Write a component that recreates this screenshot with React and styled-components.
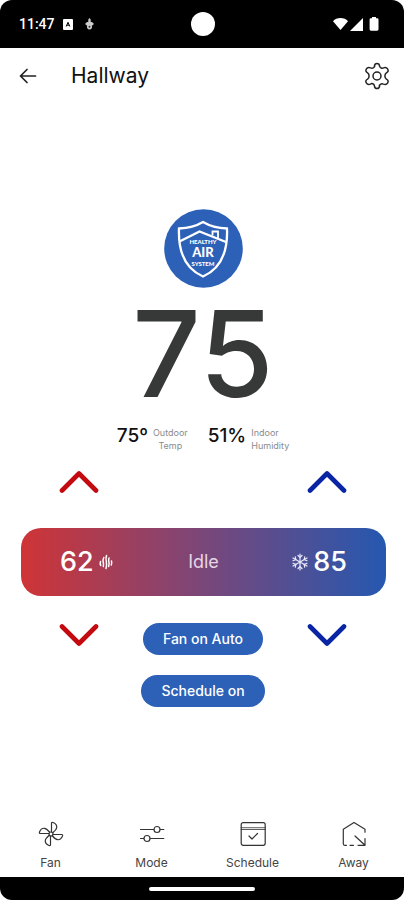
import React, { useState } from "react";
import styled, { createGlobalStyle } from "styled-components";

const GlobalStyle = createGlobalStyle`
    * {
        box-sizing: border-box;
    }

    body {
        margin: 0;
        background-color: #fff;
        color: #111;
        font-family: Inter, "Open Sans", sans-serif;
    }

    button {
        padding: 0;
        border: none;
        background: none;
        color: inherit;
        font: inherit;
        cursor: pointer;
    }

    svg {
        display: block;
        flex-shrink: 0;
    }
`;

const Screen = styled.div`
    display: flex;
    flex-direction: column;
    min-height: 100vh;
`;

const StatusBar = styled.div`
    display: grid;
    grid-template-columns: 1fr auto 1fr;
    align-items: center;
    height: 48px;
    padding: 0 25px 0 19px;
    border-radius: 12px 12px 0 0;
    background-color: #000;
    color: #fff;
`;

const StatusGroup = styled.div`
    display: flex;
    align-items: center;
    justify-content: ${({ $end }) => ($end ? "flex-end" : "flex-start")};
    gap: ${({ $gap }) => $gap};
`;

const Clock = styled.time`
    font-family: Roboto, sans-serif;
    font-size: 14px;
    font-weight: 500;
`;

const Camera = styled.div`
    width: 24px;
    height: 24px;
    margin-left: 7px;
    border-radius: 50%;
    background-color: #fff;
`;

const Header = styled.header`
    display: flex;
    align-items: center;
    height: 56px;
    padding: 0 13px 0 18px;
`;

const Title = styled.h1`
    flex-grow: 1;
    margin: 0 0 0 33px;
    font-size: 21px;
    line-height: 28px;
    font-weight: 400;
`;

const Main = styled.main`
    display: flex;
    flex-direction: column;
    flex-grow: 1;
    justify-content: center;
    padding: 2px 15px 0 17px;
`;

const Reading = styled.section`
    display: flex;
    flex-direction: column;
    align-items: center;
`;

const Temperature = styled.div`
    margin-top: 6px;
    color: #363938;
    font-size: 120px;
    line-height: 120px;
    font-weight: 500;
`;

const Stats = styled.div`
    display: flex;
    gap: 20px;
    margin-top: 12px;
`;

const Stat = styled.div`
    display: flex;
    align-items: flex-start;
    gap: 5px;
`;

const StatValue = styled.span`
    font-size: 19px;
    line-height: 20px;
    font-weight: 500;
`;

const StatLabel = styled.span`
    color: #8b8b8b;
    font-size: 9px;
    line-height: 13px;
    text-align: ${({ $align }) => $align || "left"};
`;

const Row = styled.div`
    display: grid;
    grid-template-columns: repeat(3, 1fr);
    align-items: start;
    justify-items: center;
    margin-top: ${({ $top }) => $top};
`;

const StepButton = styled.button`
    grid-column: ${({ $column }) => $column};
    color: ${({ $color }) => $color};
`;

const Setpoints = styled.section`
    display: grid;
    grid-template-columns: 1fr auto 1fr;
    align-items: center;
    height: 68px;
    margin: 34px 3px 0 4px;
    padding: 0 39px;
    border-radius: 20px;
    background: linear-gradient(90deg, #cf3436 0%, #7d4677 48%, #2558b0 100%);
    color: #fff;
`;

const Setpoint = styled.div`
    display: flex;
    align-items: center;
    justify-content: ${({ $end }) => ($end ? "flex-end" : "flex-start")};
    gap: 5px;
    font-size: 27px;
    font-weight: 500;
`;

const State = styled.span`
    color: #e6d5e5;
    font-size: 18px;
`;

const Pills = styled.div`
    display: flex;
    flex-direction: column;
    align-items: center;
    grid-column: 2;
    gap: 20px;
`;

const Pill = styled.button`
    height: 32px;
    padding: 0 20px;
    border-radius: 16px;
    background-color: #2d61b8;
    color: #fff;
    font-size: 14px;
    font-weight: 500;
    white-space: nowrap;
`;

const Nav = styled.nav`
    display: grid;
    grid-template-columns: repeat(4, 1fr);
    padding: 11px 0 5px;
`;

const NavItem = styled.a`
    display: flex;
    flex-direction: column;
    align-items: center;
    gap: 6px;
    color: #444;
    font-size: 12px;
    line-height: 18px;
    text-decoration: none;
`;

const GestureBar = styled.div`
    display: flex;
    align-items: center;
    justify-content: center;
    height: 23px;
    border-radius: 0 0 12px 12px;
    background-color: #000;
`;

const Handle = styled.div`
    width: 26%;
    height: 4px;
    border-radius: 2px;
    background-color: #fff;
`;

const KeyboardIcon = () => (
    <svg width="10" height="11" viewBox="0 0 10 11">
        <rect width="10" height="11" rx="1" fill="#fff" />
        <path d="M3.2 7.500 5 3.300 6.800 7.500M3.800 6.200h2.400" fill="none" stroke="#000" strokeWidth="1" />
    </svg>
);

const DeviceIcon = () => (
    <svg width="9" height="12" viewBox="0 0 9 12" fill="#ccc">
        <path d="M4.500 0 5.700 1.500V4H7L9 6 7.200 7.600H6.800A2.600 2.600 0 1 1 2.200 7.600H1.800L0 6 2 4h1.300V1.500z" />
        <circle cx="4.500" cy="8.700" r="1" fill="#333" />
    </svg>
);

const WifiIcon = () => (
    <svg width="15" height="12" viewBox="0 0 15 12" fill="#fff">
        <path d="M0 3.200C1.800 1 4.400 0 7.500 0S13.200 1 15 3.200L7.500 12z" />
    </svg>
);

const SignalIcon = () => (
    <svg width="13" height="13" viewBox="0 0 13 13" fill="#fff">
        <path d="M13 0v13H0z" />
    </svg>
);

const BatteryIcon = () => (
    <svg width="14" height="14" viewBox="0 0 14 14" fill="#fff">
        <path d="M7 0h4v1.300h1.300q1.200 0 1.200 1.200v9.800q0 1.400-1.400 1.400H6q-1.400 0-1.400-1.400V2.500q0-1.200 1.200-1.200H7z" />
    </svg>
);

const BackIcon = () => (
    <svg width="20" height="20" viewBox="0 0 20 20" fill="none" stroke="#222" strokeWidth="1.700" strokeLinecap="round" strokeLinejoin="round">
        <path d="M17.500 10H2.500M9 3.500 2.500 10 9 16.500" />
    </svg>
);

const GearIcon = () => (
    <svg width="28" height="28" viewBox="0 0 28 28" fill="none" stroke="#222" strokeWidth="1.500" strokeLinejoin="round">
        <path d="M11.400 4.200Q11.700 1.500 14 1.500T16.600 4.200Q17.200 5.700 18.700 6.300L20.400 5.900Q23.300 4.800 24.700 7.200T23.400 10.900Q21.900 11.900 21.900 14T23.400 17.100Q26 18.400 24.700 20.800T20.400 22.100Q18.700 21.400 17.300 22.500T16.600 23.800Q16.300 26.500 14 26.500T11.400 23.800Q11.200 22.300 9.800 21.700T7.600 22.100Q4.700 23.200 3.300 20.800T4.600 17.100Q6.100 16.100 6.100 14T4.600 10.900Q2 9.600 3.300 7.200T7.600 5.900Q9.300 6.600 10.700 5.500T11.400 4.200Z" />
        <circle cx="14" cy="14" r="4" />
    </svg>
);

const HealthyAirLogo = () => (
    <svg width="79" height="79" viewBox="0 0 79 79" role="img" aria-label="Healthy Air System">
        <circle cx="39.500" cy="39.500" r="39.300" fill="#2d61b8" />
        <g fill="none" stroke="#fff" strokeWidth="2.300">
            <path d="M39 13Q29 19 15 19.500C14 44 22 60 39 67.500C56 60 64 44 63 19.500Q49 19 39 13Z" />
            <path d="M15.500 32.500 35.500 22.500 62 33" />
            <path d="M48.500 26.500v-4h5.500v6.500" strokeWidth="1.800" />
        </g>
        <g fill="#fff" textAnchor="middle" fontFamily="Lato, sans-serif" fontWeight="900">
            <text x="39" y="35" fontSize="6">HEALTHY</text>
            <text x="39" y="48" fontSize="13">AIR</text>
            <text x="39" y="57" fontSize="6">SYSTEM</text>
        </g>
    </svg>
);

const Chevron = ({ down }) => (
    <svg width="40" height="24" viewBox="0 0 40 24" fill="none" stroke="currentColor" strokeWidth="4.600" strokeLinecap="round" strokeLinejoin="round">
        <path d={down ? "M3 3.500 20 20.500 37 3.500" : "M3 20.500 20 3.500 37 20.500"} />
    </svg>
);

const HeatIcon = () => (
    <svg width="14" height="16" viewBox="0 0 14 16" fill="none" stroke="#fff" strokeWidth="1.500" strokeLinecap="round">
        <path d="M1.500 7.500Q.9 9.500 1.700 11.500M4.800 3.500Q3.600 6 4.200 8T4.300 12.500M7.500 1.500Q6.600 4.500 7.300 7.500T7 14.500M10 4Q9.300 6 9.900 8T9.600 12.500M12.500 7Q13 9.500 12.300 11" />
    </svg>
);

const SnowIcon = () => (
    <svg width="16" height="18" viewBox="0 0 16 18" fill="none" stroke="#e9e9fa" strokeWidth="1.200" strokeLinecap="round">
        <path d="M8 1v16M1 5l14 8M15 5 1 13" />
        <path d="M6 2.500 8 4.500l2-2M6 15.500l2-2 2 2M1 7.700l2.800-1.100L3.300 3.800M15 10.300l-2.800 1.100.5 2.800M15 7.700l-2.800-1.100.5-2.800M1 10.300l2.800 1.100-.5 2.800" />
    </svg>
);

const NavIcon = ({ children }) => (
    <svg width="28" height="28" viewBox="0 0 28 28" fill="none" stroke="#333" strokeWidth="1.200" strokeLinecap="round" strokeLinejoin="round">
        {children}
    </svg>
);

const blade = "M14.500 12V3.500Q14.500 2 16 2.500C18.500 3.500 20 5 19.700 7.500Q19.500 9.500 16 12.500";

const navItems = [
    {
        label: "Fan",
        icon: (
            <>
                <circle cx="14" cy="14" r="2" />
                {[0, 90, 180, 270].map((angle) => (
                    <path key={angle} d={blade} transform={`rotate(${angle} 14 14)`} />
                ))}
            </>
        ),
    },
    {
        label: "Mode",
        icon: (
            <>
                <path d="M2.500 9.500h13.200M22.300 9.500h3.500M2.500 18.500h3.200M12.300 18.500h13.500" />
                <circle cx="19" cy="9.500" r="3" />
                <circle cx="9" cy="18.500" r="3" />
            </>
        ),
    },
    {
        label: "Schedule",
        icon: (
            <>
                <rect x="2.200" y="2.700" width="24" height="22.600" rx="2" />
                <path d="M2.200 7.700h24M2.200 9.500h24" strokeWidth=".8" />
                <path d="m10 16 3 3 5.500-5.500" />
            </>
        ),
    },
    {
        label: "Away",
        icon: (
            <>
                <path d="M6.500 25.300H4.800q-1.500 0-1.500-1.500V9.200L14 2.500l11 6.700v3M10 25.300h3.500M15 16l10 9.300M25 18.500v6.800h-7" />
            </>
        ),
    },
];

const HEAT = "#c20a10";
const COOL = "#0925a3";

const App = () => {
    const [heat, setHeat] = useState(62);
    const [cool, setCool] = useState(85);

    return (
        <Screen>
            <GlobalStyle />
            <StatusBar>
                <StatusGroup $gap="8px">
                    <Clock>11:47</Clock>
                    <StatusGroup $gap="12px">
                        <KeyboardIcon />
                        <DeviceIcon />
                    </StatusGroup>
                </StatusGroup>
                <Camera />
                <StatusGroup $gap="2px" $end>
                    <WifiIcon />
                    <SignalIcon />
                    <BatteryIcon />
                </StatusGroup>
            </StatusBar>

            <Header>
                <button type="button" aria-label="Back"><BackIcon /></button>
                <Title>Hallway</Title>
                <button type="button" aria-label="Settings"><GearIcon /></button>
            </Header>

            <Main>
                <Reading>
                    <HealthyAirLogo />
                    <Temperature>75</Temperature>
                    <Stats>
                        <Stat>
                            <StatValue>75º</StatValue>
                            <StatLabel $align="center">Outdoor<br />Temp</StatLabel>
                        </Stat>
                        <Stat>
                            <StatValue>51%</StatValue>
                            <StatLabel>Indoor<br />Humidity</StatLabel>
                        </Stat>
                    </Stats>
                </Reading>

                <Row $top="18px">
                    <StepButton type="button" aria-label="Raise heat" $column={1} $color={HEAT} onClick={() => setHeat(heat + 1)}>
                        <Chevron />
                    </StepButton>
                    <StepButton type="button" aria-label="Raise cool" $column={3} $color={COOL} onClick={() => setCool(cool + 1)}>
                        <Chevron />
                    </StepButton>
                </Row>

                <Setpoints>
                    <Setpoint>{heat} <HeatIcon /></Setpoint>
                    <State>Idle</State>
                    <Setpoint $end><SnowIcon /> {cool}</Setpoint>
                </Setpoints>

                <Row $top="27px">
                    <StepButton type="button" aria-label="Lower heat" $column={1} $color={HEAT} onClick={() => setHeat(heat - 1)}>
                        <Chevron down />
                    </StepButton>
                    <Pills>
                        <Pill type="button">Fan on Auto</Pill>
                        <Pill type="button">Schedule on</Pill>
                    </Pills>
                    <StepButton type="button" aria-label="Lower cool" $column={3} $color={COOL} onClick={() => setCool(cool - 1)}>
                        <Chevron down />
                    </StepButton>
                </Row>
            </Main>

            <Nav>
                {navItems.map(({ label, icon }) => (
                    <NavItem key={label} href={`#${label.toLowerCase()}`}>
                        <NavIcon>{icon}</NavIcon>
                        {label}
                    </NavItem>
                ))}
            </Nav>

            <GestureBar>
                <Handle />
            </GestureBar>
        </Screen>
    );
};

export default App;
